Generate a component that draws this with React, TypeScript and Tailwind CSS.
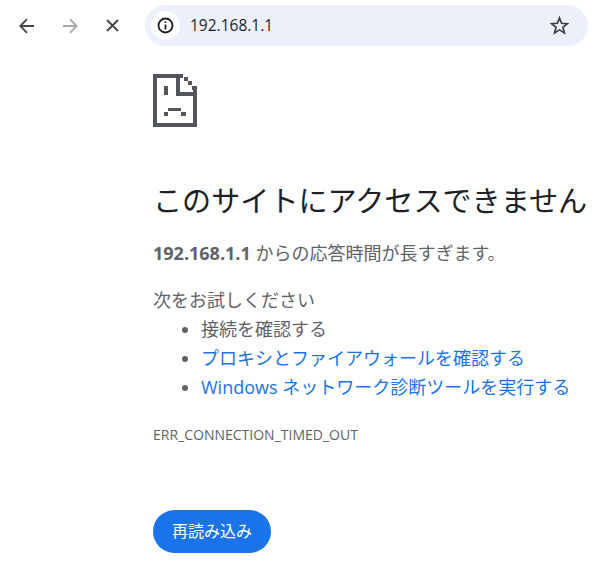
import React from "react";

const font = "font-['Open_Sans','Noto_Sans_CJK_JP',sans-serif]";

function ArrowIcon({ flip, color }: { flip?: boolean; color: string }) {
  return (
    <svg width="16" height="16" viewBox="0 0 16 16" fill="none" stroke={color} strokeWidth="1.8" style={{ transform: flip ? "scaleX(-1)" : undefined }}>
      <path d="M15 8H1.5M8 1.2L1.3 8L8 14.8" />
    </svg>
  );
}

function SadTab() {
  return (
    <svg width="44" height="53" viewBox="0 0 44 53" shapeRendering="crispEdges" fill="#53565a">
      <path d="M0 0H30V4H4V49H40V16H44V53H0Z" />
      <path d="M23 0H27V18H44V22H23Z" />
      <rect x="31" y="3" width="4" height="4" />
      <rect x="35" y="7" width="4" height="4" />
      <rect x="39" y="12" width="5" height="4" />
      <rect x="11" y="12" width="4" height="9" />
      <rect x="15" y="34" width="13" height="3" />
      <rect x="11" y="38" width="4" height="4" />
      <rect x="28" y="38" width="5" height="4" />
    </svg>
  );
}

export default function App() {
  return (
    <div className={`w-[600px] h-[573px] bg-white overflow-hidden ${font}`}>
      <div className="flex items-center h-[46px] pt-[5px] pl-[19px]">
        <ArrowIcon color="#474747" />
        <div className="ml-[27px]">
          <ArrowIcon flip color="#a9a9a9" />
        </div>
        <svg className="ml-[28px]" width="13" height="13" viewBox="0 0 13 13" stroke="#474747" strokeWidth="1.9">
          <path d="M1 1L12 12M12 1L1 12" />
        </svg>
        <div className="ml-[26px] flex items-center w-[443px] h-[41px] rounded-full bg-[#ecf0fa] pl-[6px] pr-[19px]">
          <div className="flex items-center justify-center w-[29px] h-[29px] rounded-full bg-white">
            <svg width="17" height="17" viewBox="0 0 17 17" fill="none" stroke="#1f1f1f" strokeWidth="1.8">
              <circle cx="8.5" cy="8.5" r="7" />
              <path d="M8.5 7.5V12.5M8.5 4.4V6" />
            </svg>
          </div>
          <span className="ml-[10px] text-[15.5px] text-[#1f1f1f]">192.168.1.1</span>
          <svg className="ml-auto" width="19" height="19" viewBox="0 0 19 19" fill="none" stroke="#3f3f3f" strokeWidth="1.7">
            <path d="M9.5 2L11.6 7.3L17.4 7.7L12.9 11.3L14.4 17L9.5 13.9L4.6 17L6.1 11.3L1.6 7.7L7.4 7.3Z" />
          </svg>
        </div>
      </div>

      <main className="pl-[153px] whitespace-nowrap">
        <div className="mt-[28px] h-[53px]">
          <SadTab />
        </div>
        <h1 className="mt-[54px] text-[29.1px] leading-[40px] font-normal text-[#202124]">このサイトにアクセスできません</h1>
        <p className="mt-[18px] text-[18px] leading-[28px] text-[#5f6368]">
          <b className="font-bold">192.168.1.1</b> からの応答時間が長すぎます。
        </p>
        <p className="mt-[19px] text-[18px] leading-[28px] text-[#5f6368]">次をお試しください</p>
        <ul className="pl-[48px] pt-[1px] text-[18px] leading-[29px] list-disc text-[#5f6368]">
          <li>接続を確認する</li>
          <li><a className="text-[#1a73e8]">プロキシとファイアウォールを確認する</a></li>
          <li><a className="text-[#1a73e8]">Windows ネットワーク診断ツールを実行する</a></li>
        </ul>
        <div className="mt-[24px] text-[14px] leading-[18px] text-[#5f6368]">ERR_CONNECTION_TIMED_OUT</div>
        <button className="mt-[66px] flex items-center justify-center w-[118px] h-[43px] pb-[2px] rounded-full bg-[#1a73e8] text-white text-[16px]">再読み込み</button>
      </main>
    </div>
  );
}
